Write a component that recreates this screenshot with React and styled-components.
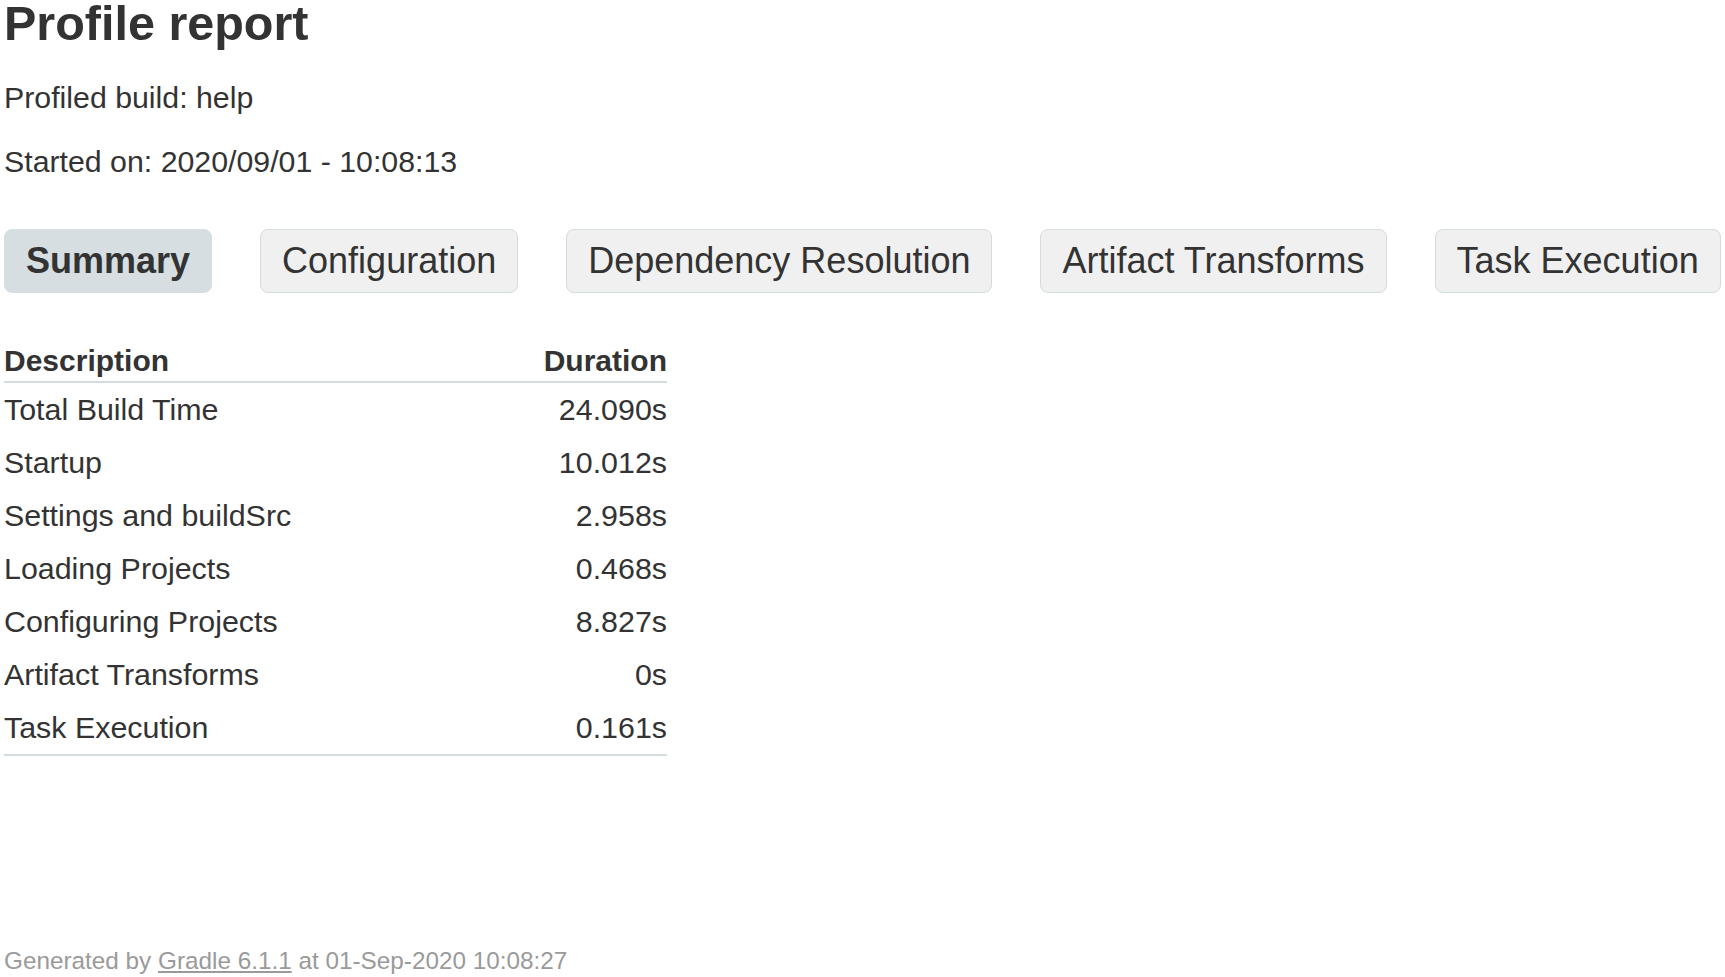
import React from "react";
import styled, { createGlobalStyle } from "styled-components";

const GlobalStyle = createGlobalStyle`
  html, body {
    margin: 0;
    padding: 0;
    background: #ffffff;
  }
  body {
    font-family: "Liberation Sans", Arial, Helvetica, sans-serif;
    color: #333333;
  }
`;

const Page = styled.div`
  display: flex;
  flex-direction: column;
  padding: 0 4px;
  min-height: 977px;
  box-sizing: border-box;
`;

const Title = styled.h1`
  margin: 0;
  font-size: 48.5px;
  line-height: 47px;
  font-weight: 700;
  color: #333333;
`;

const Meta = styled.p`
  margin: ${(p) => p.$top}px 0 0;
  font-size: 30.3px;
  line-height: 36px;
  color: #333333;
`;

const Tabs = styled.div`
  display: flex;
  gap: 48px;
  margin-top: 49px;
`;

const Tab = styled.div`
  padding: 10px 21px;
  font-size: 36px;
  line-height: 42px;
  font-weight: ${(p) => (p.$active ? 700 : 400)};
  color: #333333;
  white-space: nowrap;
  border-radius: 8px;
  border: 1px solid ${(p) => (p.$active ? "#d6dee1" : "#d3dcdf")};
  background: ${(p) => (p.$active ? "#d6dee1" : "#f0f0f0")};
`;

const Table = styled.table`
  margin-top: 47px;
  width: 663px;
  border-collapse: collapse;
  font-size: 30.4px;
  color: #333333;
`;

const HeadCell = styled.th`
  padding: 0;
  height: 41px;
  text-align: ${(p) => (p.$right ? "right" : "left")};
  font-weight: 700;
  font-size: 30px;
  vertical-align: middle;
  border-bottom: 2px solid #d3dcdf;
`;

const Row = styled.tr`
  &:last-child td {
    border-bottom: 2px solid #d3dcdf;
  }
`;

const Cell = styled.td`
  padding: 0;
  height: 53px;
  text-align: ${(p) => (p.$right ? "right" : "left")};
  vertical-align: middle;
  white-space: nowrap;
`;

const Footer = styled.div`
  margin-top: auto;
  padding-bottom: 2px;
  font-size: 24.3px;
  line-height: 28px;
  color: #9a9a9a;

  a {
    color: #9a9a9a;
    text-decoration: underline;
  }
`;

const tabs = [
  "Summary",
  "Configuration",
  "Dependency Resolution",
  "Artifact Transforms",
  "Task Execution",
];

const rows = [
  ["Total Build Time", "24.090s"],
  ["Startup", "10.012s"],
  ["Settings and buildSrc", "2.958s"],
  ["Loading Projects", "0.468s"],
  ["Configuring Projects", "8.827s"],
  ["Artifact Transforms", "0s"],
  ["Task Execution", "0.161s"],
];

export default function App() {
  return (
    <>
      <GlobalStyle />
      <Page>
        <Title>Profile report</Title>
        <Meta $top={33}>Profiled build: help</Meta>
        <Meta $top={28}>Started on: 2020/09/01 - 10:08:13</Meta>

        <Tabs>
          {tabs.map((t, i) => (
            <Tab key={t} $active={i === 0}>
              {t}
            </Tab>
          ))}
        </Tabs>

        <Table>
          <thead>
            <tr>
              <HeadCell>Description</HeadCell>
              <HeadCell $right>Duration</HeadCell>
            </tr>
          </thead>
          <tbody>
            {rows.map(([label, value]) => (
              <Row key={label}>
                <Cell>{label}</Cell>
                <Cell $right>{value}</Cell>
              </Row>
            ))}
          </tbody>
        </Table>

        <Footer>
          Generated by <a href="#">Gradle 6.1.1</a> at 01-Sep-2020 10:08:27
        </Footer>
      </Page>
    </>
  );
}
